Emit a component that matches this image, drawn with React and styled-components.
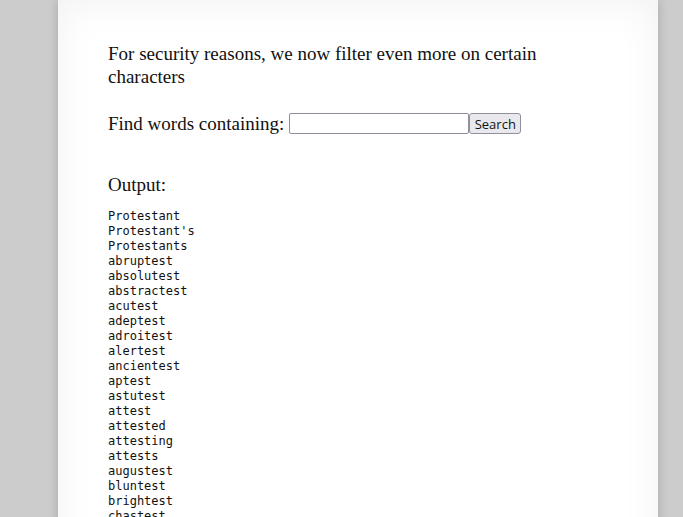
import React from 'react'
import styled, { createGlobalStyle } from 'styled-components'

const Global = createGlobalStyle`
  html, body {
    margin: 0;
    padding: 0;
    background: #cccccc;
  }
`

const words = [
  'Protestant', "Protestant's", 'Protestants', 'abruptest', 'absolutest',
  'abstractest', 'acutest', 'adeptest', 'adroitest', 'alertest', 'ancientest',
  'aptest', 'astutest', 'attest', 'attested', 'attesting', 'attests',
  'augustest', 'bluntest', 'brightest', 'chastest', 'contest', 'contestant',
  'contested', 'contests', 'curtest', 'daintiest', 'deftest', 'detest',
]

const Page = styled.div`
  width: 500px;
  margin: 0 0 0 58px;
  padding: 30px 50px 0;
  background: #ffffff;
  min-height: 600px;
  box-shadow: 0 0 10px rgba(0, 0, 0, 0.18), inset 0 0 40px rgba(0, 0, 0, 0.06);
  font-family: "Liberation Serif", serif;
  color: #111;
`

const Intro = styled.p`
  margin: 12px 0 0;
  font-size: 19px;
  line-height: 23px;
`

const SearchForm = styled.form`
  display: flex;
  align-items: center;
  margin-top: 24px;
  font-size: 19px;
  line-height: 23px;
`

const Label = styled.label`
  margin-right: 5px;
`

const Field = styled.input`
  width: 176px;
  height: 17px;
  padding: 1px;
  border: 1px solid #8f8f9d;
  border-radius: 2px;
  font-size: 13px;
`

const Btn = styled.button`
  width: 52px;
  height: 21px;
  padding: 0;
  font-family: "Open Sans", sans-serif;
  font-size: 13px;
  background: #e9e9ed;
  border: 1px solid #8f8f9d;
  border-radius: 3px;
  color: #111;
`

const OutputTitle = styled.h3`
  margin: 38px 0 0;
  font-weight: normal;
  font-size: 19px;
  line-height: 23px;
`

const List = styled.pre`
  margin: 13px 0 0;
  font-family: "DejaVu Sans Mono", monospace;
  font-size: 12px;
  line-height: 15px;
`

export default function App() {
  return (
    <>
      <Global />
      <Page>
        <Intro>For security reasons, we now filter even more on certain characters</Intro>
        <SearchForm onSubmit={e => e.preventDefault()}>
          <Label>Find words containing:</Label>
          <Field type="text" />
          <Btn type="submit">Search</Btn>
        </SearchForm>
        <OutputTitle>Output:</OutputTitle>
        <List>{words.join('\n')}</List>
      </Page>
    </>
  )
}
